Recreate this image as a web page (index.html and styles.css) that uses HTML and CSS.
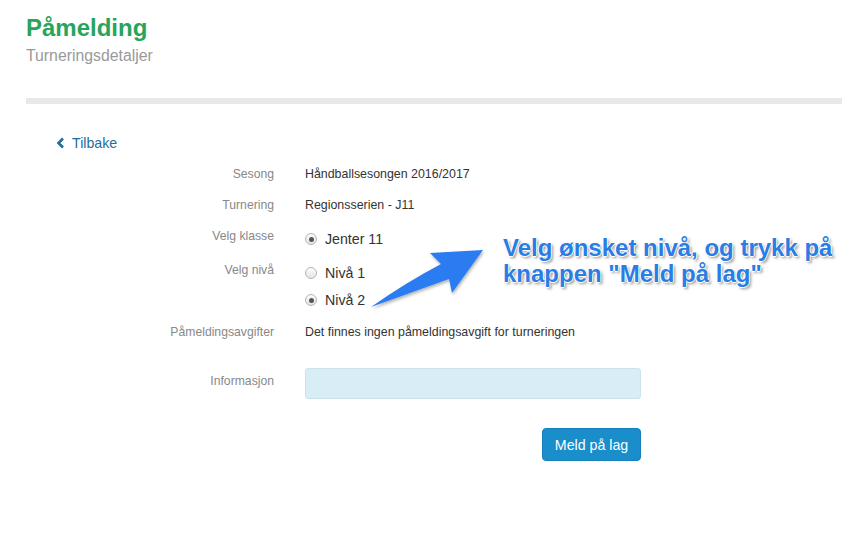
FILE: index.html
```html
<!DOCTYPE html>
<html lang="no">

<head>
    <meta charset="UTF-8">
    <meta name="viewport" content="width=device-width, initial-scale=1.0">
    <title>Påmelding</title>
    <link rel="stylesheet" href="styles.css">
</head>

<body>
    <div class="page">
        <div class="page-header">
            <h1>Påmelding</h1>
            <p class="subtitle">Turneringsdetaljer</p>
        </div>
        <div class="divider"></div>

        <a href="#" class="back">
            <svg width="9" height="12" viewBox="0 0 9 12">
                <polyline points="7,1.5 2.5,6 7,10.5" fill="none" stroke="#1f6d9e" stroke-width="2.6" />
            </svg>
            Tilbake
        </a>

        <form class="details" action="#">
            <div class="row">
                <div class="label">Sesong</div>
                <div class="value">Håndballsesongen 2016/2017</div>
            </div>
            <div class="row">
                <div class="label">Turnering</div>
                <div class="value">Regionsserien - J11</div>
            </div>
            <div class="row row-klasse">
                <div class="label">Velg klasse</div>
                <div class="value">
                    <div class="option"><span class="radio checked"></span>Jenter 11</div>
                </div>
            </div>
            <div class="row row-niva">
                <div class="label">Velg nivå</div>
                <div class="value">
                    <div class="option"><span class="radio"></span>Nivå 1</div>
                    <div class="option"><span class="radio checked"></span>Nivå 2</div>
                </div>
            </div>
            <div class="row row-avgift">
                <div class="label">Påmeldingsavgifter</div>
                <div class="value">Det finnes ingen påmeldingsavgift for turneringen</div>
            </div>
            <div class="row row-info">
                <div class="label">Informasjon</div>
                <div class="value"><input type="text" class="info-input"></div>
            </div>
            <div class="row">
                <div class="label"></div>
                <div class="value actions"><button type="submit" class="btn">Meld på lag</button></div>
            </div>
        </form>

        <svg class="arrow" width="843" height="539" viewBox="0 0 843 539">
            <defs>
                <filter id="shadow" x="-20%" y="-20%" width="140%" height="140%">
                    <feDropShadow dx="1" dy="2" stdDeviation="1.5" flood-color="#000" flood-opacity="0.3" />
                </filter>
            </defs>
            <path d="M371,307 Q405,283 441,264 L430,253 L483,250 L452,293 L449,279 Q410,293 371,307 Z" fill="#2a7cf0" filter="url(#shadow)" />
        </svg>
        <div class="callout">Velg ønsket nivå, og trykk på<br>knappen "Meld på lag"</div>
    </div>
</body>

</html>
```

FILE: styles.css
```css
* {
    margin: 0;
    padding: 0;
    box-sizing: border-box;
    font-family: "Liberation Sans", Arial, Helvetica, sans-serif;
}

body {
    background: #fff;
    color: #333;
}

.page {
    position: relative;
    width: 843px;
    height: 539px;
    padding: 14px 1px 0 26px;
}

.page-header h1 {
    font-size: 24px;
    line-height: 28px;
    font-weight: bold;
    color: #28a45b;
}

.subtitle {
    margin-top: 4px;
    font-size: 15.8px;
    line-height: 20px;
    color: #999;
}

.divider {
    margin-top: 32px;
    height: 6px;
    background: #e8e8e8;
}

.back {
    display: flex;
    align-items: center;
    gap: 7px;
    margin: 29px 0 0 30px;
    width: max-content;
    font-size: 14.2px;
    line-height: 20px;
    color: #1f6d9e;
    text-decoration: none;
}

.details {
    margin-top: 11px;
}

.row {
    display: grid;
    grid-template-columns: 248px 336px;
    column-gap: 31px;
    min-height: 31px;
    font-size: 12.2px;
    line-height: 20px;
}

.label {
    text-align: right;
    color: #888;
}

.value {
    color: #333;
    font-size: 12.4px;
}

.row-klasse {
    min-height: 34px;
}

.row-niva {
    min-height: 62px;
}

.row-avgift {
    min-height: 46px;
}

.row-info {
    min-height: 60px;
}

.row-info .label {
    padding-top: 3px;
}

.option {
    display: flex;
    align-items: center;
    padding-top: 3px;
    font-size: 14.2px;
    line-height: 20px;
}

.option + .option {
    padding-top: 7px;
}

.radio {
    position: relative;
    width: 12px;
    height: 12px;
    margin-right: 8px;
    border: 1px solid #b5b5b5;
    border-radius: 50%;
    background: linear-gradient(#fcfcfc, #e4e4e4);
}

.radio.checked::after {
    content: "";
    position: absolute;
    left: 2.5px;
    top: 2.5px;
    width: 5px;
    height: 5px;
    border-radius: 50%;
    background: #555;
}

.info-input {
    display: block;
    width: 336px;
    height: 31px;
    background: #d9edf7;
    border: 1px solid #c9e3ee;
    border-radius: 3px;
    outline: 0;
}

.actions {
    display: flex;
    justify-content: flex-end;
}

.btn {
    width: 99px;
    height: 33px;
    background: #1a8dcb;
    color: #fff;
    border: 1px solid #1580ba;
    border-radius: 4px;
    font-size: 14.2px;
    cursor: pointer;
}

.arrow {
    position: absolute;
    left: 0;
    top: 0;
    pointer-events: none;
}

.callout {
    position: absolute;
    left: 503px;
    top: 235px;
    font-size: 24px;
    line-height: 26px;
    font-weight: bold;
    color: #2b7de6;
    white-space: nowrap;
    text-shadow: 1px 0 0 #fff, -1px 0 0 #fff, 0 1px 0 #fff, 0 -1px 0 #fff,
        2px 2px 3px rgba(0, 0, 0, 0.45);
}
```
